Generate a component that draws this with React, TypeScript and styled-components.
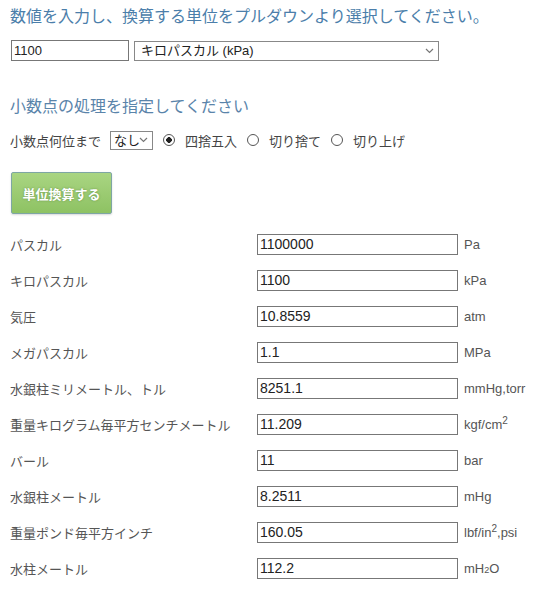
import React, { useState } from "react";
import styled, { createGlobalStyle } from "styled-components";

interface unitRow {
  label: string;
  value: string;
  unit: React.ReactNode;
}

const roundModes = ["四捨五入", "切り捨て", "切り上げ"];

const Chevron = () => (
  <svg width="9" height="6" viewBox="0 0 9 6">
    <path d="M1 1l3.5 3.5L8 1" fill="none" stroke="#777" strokeWidth="1.2" />
  </svg>
);

const App = () => {
  const [value, setValue] = useState<string>("1100");
  const [mode, setMode] = useState<number>(0);

  const rows: unitRow[] = [
    { label: "パスカル", value: "1100000", unit: "Pa" },
    { label: "キロパスカル", value: "1100", unit: "kPa" },
    { label: "気圧", value: "10.8559", unit: "atm" },
    { label: "メガパスカル", value: "1.1", unit: "MPa" },
    { label: "水銀柱ミリメートル、トル", value: "8251.1", unit: "mmHg,torr" },
    {
      label: "重量キログラム毎平方センチメートル",
      value: "11.209",
      unit: (
        <>
          kgf/cm<Sup>2</Sup>
        </>
      ),
    },
    { label: "バール", value: "11", unit: "bar" },
    { label: "水銀柱メートル", value: "8.2511", unit: "mHg" },
    {
      label: "重量ポンド毎平方インチ",
      value: "160.05",
      unit: (
        <>
          lbf/in<Sup>2</Sup>,psi
        </>
      ),
    },
    {
      label: "水柱メートル",
      value: "112.2",
      unit: (
        <>
          mH<SmallDigit>2</SmallDigit>O
        </>
      ),
    },
  ];

  return (
    <>
      <GlobalStyle />
      <Page>
        <Title>数値を入力し、換算する単位をプルダウンより選択してください。</Title>
        <InputRow>
          <ValueInput value={value} onChange={(e) => setValue(e.target.value)} />
          <SelectWrap $width={305}>
            <UnitSelect defaultValue="kPa">
              <option value="kPa">キロパスカル (kPa)</option>
            </UnitSelect>
            <ChevronBox>
              <Chevron />
            </ChevronBox>
          </SelectWrap>
        </InputRow>

        <SubTitle>小数点の処理を指定してください</SubTitle>
        <DecimalRow>
          <span>小数点何位まで</span>
          <SelectWrap $width={43}>
            <DigitSelect defaultValue="none">
              <option value="none">なし</option>
            </DigitSelect>
            <ChevronBox>
              <Chevron />
            </ChevronBox>
          </SelectWrap>
          {roundModes.map((m, idx) => (
            <RadioLabel key={m} onClick={() => setMode(idx)}>
              <Radio $checked={mode === idx} />
              {m}
            </RadioLabel>
          ))}
        </DecimalRow>

        <ConvertButton>単位換算する</ConvertButton>

        <ResultGrid>
          {rows.map((row) => (
            <React.Fragment key={row.label}>
              <Label>{row.label}</Label>
              <ResultInput value={row.value} readOnly />
              <Unit>{row.unit}</Unit>
            </React.Fragment>
          ))}
        </ResultGrid>
      </Page>
    </>
  );
};

const GlobalStyle = createGlobalStyle`
  body {
    margin: 0;
    background: #fff;
    font-family: "Liberation Sans", "Noto Sans CJK JP", sans-serif;
  }
`;

const Page = styled.div`
  padding: 7px 10px 0;
`;

const Title = styled.h2`
  margin: 0;
  font-size: 16px;
  line-height: 20px;
  font-weight: normal;
  color: #4b7eaa;
`;

const InputRow = styled.div`
  display: flex;
  align-items: center;
  gap: 5px;
  margin-top: 13px;
  padding-left: 1px;
`;

const ValueInput = styled.input`
  box-sizing: border-box;
  width: 118px;
  height: 21px;
  padding: 0 2px;
  border: 1px solid #777;
  font-family: "Liberation Sans", sans-serif;
  font-size: 13px;
  color: #222;
  outline: none;
`;

const SelectWrap = styled.div<{ $width: number }>`
  position: relative;
  width: ${(p) => p.$width}px;
`;

const UnitSelect = styled.select`
  box-sizing: border-box;
  width: 100%;
  height: 20px;
  padding: 0 20px 0 6px;
  appearance: none;
  background: #fff;
  border: 1px solid #888;
  border-radius: 0;
  font-family: "Liberation Sans", "Noto Sans CJK JP", sans-serif;
  font-size: 13px;
  color: #222;
  outline: none;
`;

const DigitSelect = styled(UnitSelect)`
  height: 19px;
  padding: 0 12px 0 3px;
`;

const ChevronBox = styled.span`
  position: absolute;
  right: 5px;
  top: 0;
  bottom: 0;
  display: flex;
  align-items: center;
  pointer-events: none;
`;

const SubTitle = styled.h3`
  margin: 36px 0 0;
  font-size: 16px;
  line-height: 20px;
  font-weight: normal;
  color: #5a84aa;
`;

const DecimalRow = styled.div`
  display: flex;
  align-items: center;
  gap: 10px;
  margin-top: 13px;
  height: 20px;
  font-size: 13px;
  color: #444;

  & > span:first-child {
    margin-right: -1px;
  }
`;

const RadioLabel = styled.label`
  display: flex;
  align-items: center;
  gap: 10px;
  cursor: pointer;
`;

const Radio = styled.span<{ $checked: boolean }>`
  box-sizing: border-box;
  width: 12px;
  height: 12px;
  border: 1px solid #555;
  border-radius: 50%;
  background: ${(p) =>
    p.$checked ? "radial-gradient(circle, #222 0 2.6px, #fff 3px)" : "#fff"};
`;

const ConvertButton = styled.button`
  display: block;
  box-sizing: border-box;
  width: 101px;
  height: 42px;
  margin: 22px 0 0 1px;
  border: 1px solid #7ea6a4;
  border-radius: 2px;
  background: linear-gradient(#a9d582, #8ec263);
  box-shadow: 0 1px 2px rgba(0, 0, 0, 0.15);
  color: #fff;
  font-family: "Liberation Sans", "Noto Sans CJK JP", sans-serif;
  font-size: 13px;
  font-weight: bold;
  text-shadow: 0 0 2px rgba(60, 100, 40, 0.6);
  cursor: pointer;
`;

const ResultGrid = styled.div`
  display: grid;
  grid-template-columns: 247px 201px auto;
  grid-auto-rows: 36px;
  align-items: center;
  margin-top: 12px;
`;

const Label = styled.span`
  font-size: 13px;
  color: #555;
`;

const ResultInput = styled.input`
  box-sizing: border-box;
  width: 201px;
  height: 21px;
  padding: 0 2px;
  border: 1px solid #777;
  font-family: "Liberation Sans", sans-serif;
  font-size: 14px;
  color: #222;
  outline: none;
`;

const Unit = styled.span`
  padding-left: 6px;
  font-family: "Liberation Sans", sans-serif;
  font-size: 13px;
  color: #555;
`;

const Sup = styled.sup`
  font-size: 10px;
  line-height: 0;
`;

const SmallDigit = styled.span`
  font-size: 9px;
`;

export default App;
